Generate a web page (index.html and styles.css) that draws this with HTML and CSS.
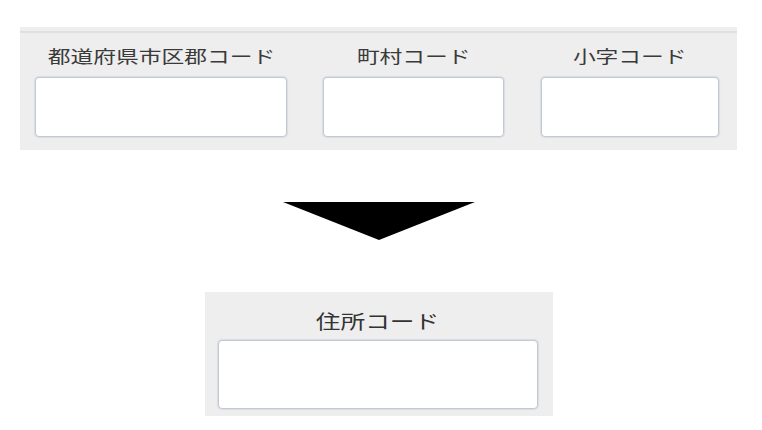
FILE: index.html
```html
<!DOCTYPE html>
<html lang="ja">
<head>
<meta charset="utf-8">
<link rel="stylesheet" href="styles.css">
</head>
<body>
<div class="page">
  <div class="panel panel-top">
    <div class="rule"></div>
    <div class="fields">
      <div class="field f1">
        <div class="label"><span>都道府県市区郡コード</span></div>
        <div class="input"></div>
      </div>
      <div class="field f2">
        <div class="label"><span>町村コード</span></div>
        <div class="input"></div>
      </div>
      <div class="field f3">
        <div class="label"><span>小字コード</span></div>
        <div class="input"></div>
      </div>
    </div>
  </div>

  <div class="arrow">
    <svg width="192" height="38" viewBox="0 0 192 38"><polygon points="0,0 192,0 96,38" fill="#000"/></svg>
  </div>

  <div class="panel panel-bottom">
    <div class="label big"><span>住所コード</span></div>
    <div class="input tall"></div>
  </div>
</div>
</body>
</html>
```
FILE: styles.css
```css
html, body {
  margin: 0;
  padding: 0;
  background: #ffffff;
}
body {
  font-family: "Noto Sans CJK JP", "Noto Sans", sans-serif;
  color: #3a3a3a;
}
.page {
  display: flex;
  flex-direction: column;
  align-items: flex-start;
}
.panel {
  background: #eeeeee;
  box-sizing: border-box;
}
.panel-top {
  margin: 27px 0 0 20px;
  width: 717px;
  height: 123px;
  padding: 4px 18px 0 15px;
}
.rule {
  height: 2px;
  background: #dde0e4;
  margin: 0 -18px 0 -15px;
}
.fields {
  display: flex;
  gap: 36px;
}
.field {
  display: flex;
  flex-direction: column;
}
.f1 { width: 252px; }
.f2 { width: 181px; margin-right: 1px; }
.f3 { width: 178px; }
.label {
  text-align: center;
  margin-top: 8px;
  height: 30px;
  line-height: 30px;
  font-size: 17.5px;
  margin-bottom: 6px;
  white-space: nowrap;
}
.label span {
  display: inline-block;
  transform: scaleX(1.3);
  transform-origin: center;
}
.input {
  height: 60px;
  background: #ffffff;
  border: 1px solid #c3c9d1;
  border-radius: 4px;
  box-shadow: 0 0 1px 1px #d9dde3;
  box-sizing: border-box;
}
.arrow {
  margin: 52px 0 0 283px;
  height: 38px;
}
.arrow svg {
  display: block;
}
.panel-bottom {
  margin: 52px 0 0 205px;
  width: 348px;
  height: 124px;
  padding: 12px 15px 0 13px;
  display: flex;
  flex-direction: column;
}
.label.big {
  margin-top: 0;
  height: 34px;
  line-height: 34px;
  font-size: 19px;
  margin-bottom: 2px;
  color: #333333;
}
.input.tall {
  height: 69px;
}
```
